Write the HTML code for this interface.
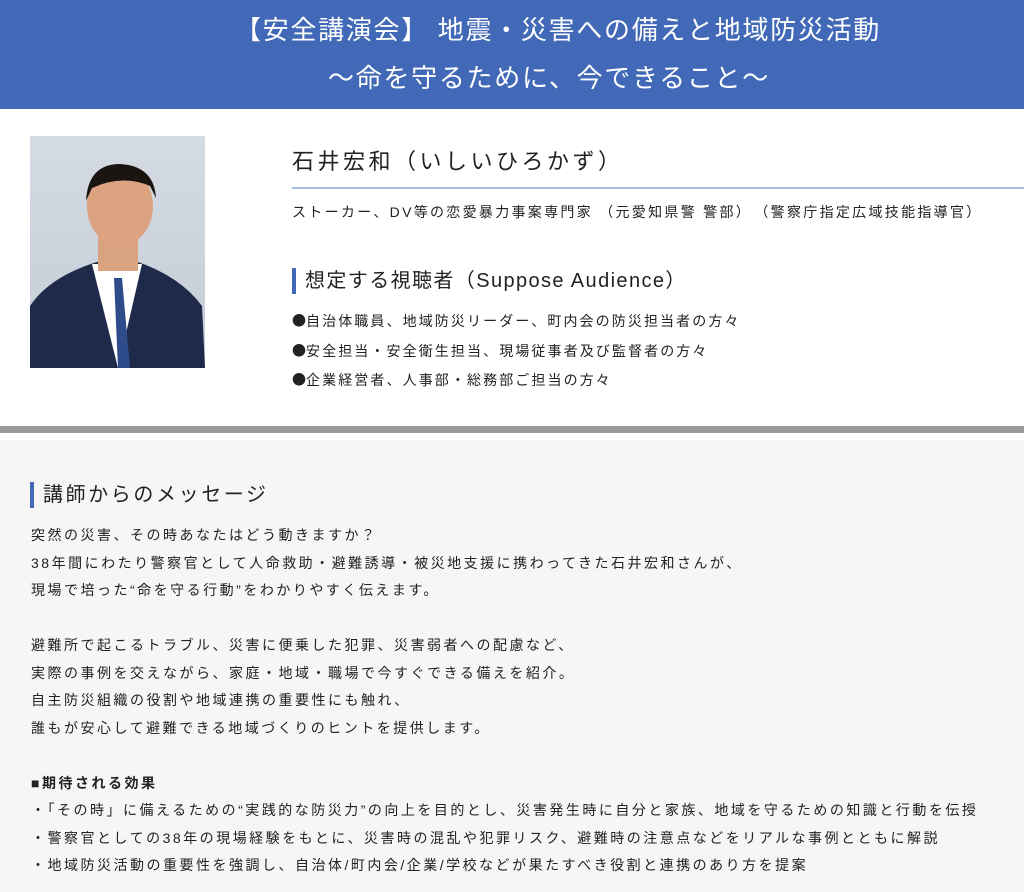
<!DOCTYPE html>
<html><head><meta charset="utf-8"><style>
body{margin:0;width:1024px;height:892px;overflow:hidden;background:#f6f6f6;font-family:"Liberation Sans","Noto Sans CJK JP",sans-serif;color:#222}
.hd{position:absolute;left:0;top:0;width:1024px;height:109px;background:#4169b7;color:#fff;font-size:26px;letter-spacing:1.7px;text-align:center}
.hd div{position:absolute;left:0;width:1024px;box-sizing:border-box}
.top{position:absolute;left:0;top:109px;width:1024px;height:317px;background:#fff}
.photo{position:absolute;left:30px;top:136px;width:175px;height:232px;background:linear-gradient(#d5dbe3,#c5ccd6)}
.t{position:absolute;white-space:nowrap}
.bar{border-left:4px solid #4169b7;padding-left:9px}
.c{font-family:"Noto Sans CJK JP",sans-serif;letter-spacing:0}
</style></head><body>
<div class="hd"><div style="top:10px;padding-left:92px">【安全講演会】 地震・災害への備えと地域防災活動</div><div style="top:58px;padding-left:74px">～命を守るために、今できること～</div></div>
<div class="top"></div>
<div class="photo">
<svg width="175" height="232" viewBox="0 0 175 232">
<path d="M0 232 L0 170 Q20 140 70 125 L105 125 Q150 140 172 170 L175 232Z" fill="#1f2a4a"/>
<path d="M62 128 L88 232 L112 128Z" fill="#fff"/>
<path d="M84 142 L92 142 L100 232 L88 232Z" fill="#2e4b8a"/>
<rect x="68" y="95" width="40" height="40" fill="#d9a37f"/>
<ellipse cx="90" cy="70" rx="33" ry="40" fill="#dca381"/>
<path d="M56 65 Q58 28 90 28 Q124 30 126 62 L120 50 Q92 38 62 52Z" fill="#1a1410"/>
</svg></div>
<div class="t" style="left:292px;top:144px;font-size:22px;letter-spacing:3.5px">石井宏和（いしいひろかず）</div>
<div style="position:absolute;left:292px;top:187px;width:732px;height:2px;background:#a9bce4"></div>
<div class="t" style="left:292px;top:202px;font-size:14px;letter-spacing:2.3px">ストーカー、DV等の恋愛暴力事案専門家 （元愛知県警 警部）　（警察庁指定広域技能指導官）</div>
<div class="t bar" style="left:292px;top:268px;font-size:20px;line-height:26px;letter-spacing:1.4px">想定する視聴者（Suppose Audience）</div>
<div style="position:absolute;left:292px;top:307px;font-size:14px;letter-spacing:2.1px;line-height:29.5px;white-space:nowrap"><span class="c">●</span>自治体職員、地域防災リーダー、町内会の防災担当者の方々<br><span class="c">●</span>安全担当・安全衛生担当、現場従事者及び監督者の方々<br><span class="c">●</span>企業経営者、人事部・総務部ご担当の方々</div>
<div style="position:absolute;left:0;top:426px;width:1024px;height:7px;background:#999"></div>
<div style="position:absolute;left:0;top:433px;width:1024px;height:7px;background:#fff"></div>
<div class="t bar" style="left:30px;top:482px;font-size:20px;line-height:26px;letter-spacing:2.6px">講師からのメッセージ</div>
<div class="t" style="left:31px;top:522px;font-size:14px;line-height:27.5px;letter-spacing:2.5px">突然の災害、その時あなたはどう動きますか？<br>38年間にわたり警察官として人命救助・避難誘導・被災地支援に携わってきた石井宏和さんが、<br>現場で培った“命を守る行動”をわかりやすく伝えます。<br><br>避難所で起こるトラブル、災害に便乗した犯罪、災害弱者への配慮など、<br>実際の事例を交えながら、家庭・地域・職場で今すぐできる備えを紹介。<br>自主防災組織の役割や地域連携の重要性にも触れ、<br>誰もが安心して避難できる地域づくりのヒントを提供します。<br><br><b>■期待される効果</b><br>・「その時」に備えるための“実践的な防災力”の向上を目的とし、災害発生時に自分と家族、地域を守るための知識と行動を伝授<br>・警察官としての38年の現場経験をもとに、災害時の混乱や犯罪リスク、避難時の注意点などをリアルな事例とともに解説<br>・地域防災活動の重要性を強調し、自治体/町内会/企業/学校などが果たすべき役割と連携のあり方を提案</div>
</body></html>
